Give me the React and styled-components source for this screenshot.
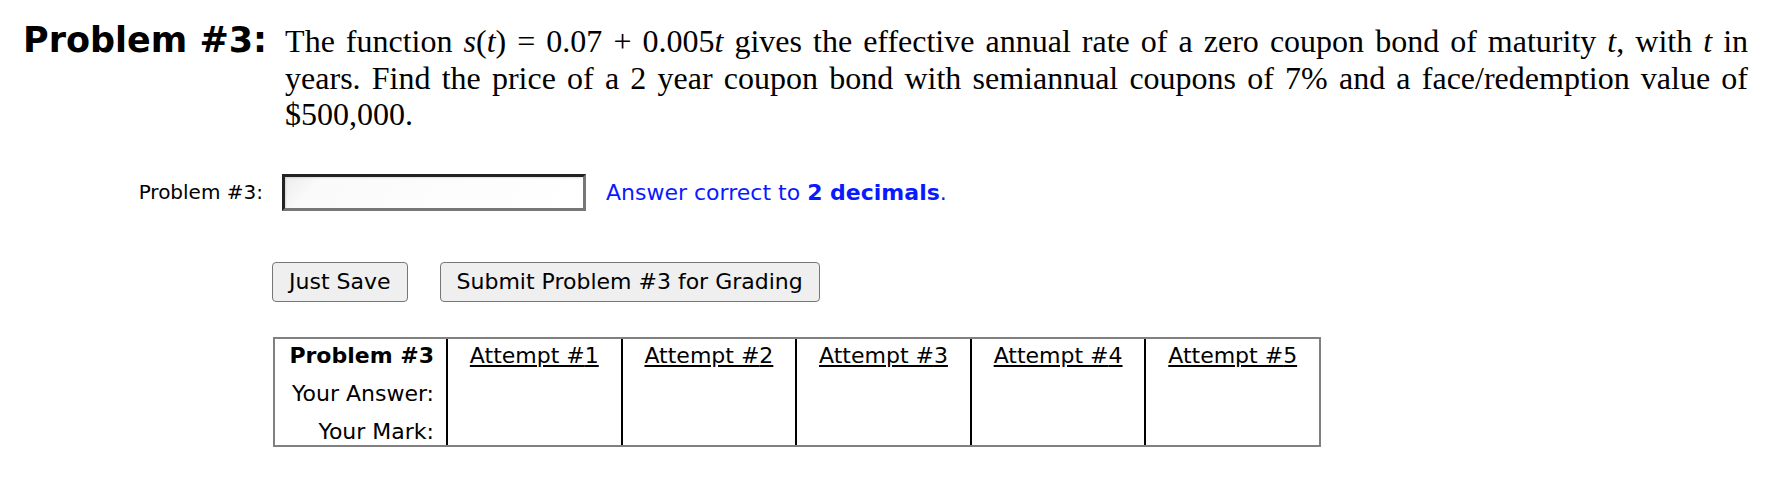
import styled, { createGlobalStyle } from "styled-components";

const GlobalStyle = createGlobalStyle`
  body {
    margin: 0;
    background: #ffffff;
    color: #000000;
    font-family: "DejaVu Sans", Verdana, sans-serif;
  }
`;

const Page = styled.div`
  width: 1772px;
  height: 500px;
  background: #fff;
`;

const Header = styled.div`
  display: flex;
  align-items: baseline;
  gap: 18px;
  padding: 20px 24px 0 23px;
`;

const Title = styled.h1`
  margin: 0;
  font-size: 35px;
  font-weight: bold;
  white-space: nowrap;
`;

const Statement = styled.p`
  flex: 1;
  margin: 0;
  font-family: "Liberation Serif", "Times New Roman", serif;
  font-size: 32px;
  line-height: 36.5px;
  text-align: justify;
`;

const Var = styled.i`
  font-style: italic;
`;

const AnswerRow = styled.div`
  display: flex;
  align-items: center;
  margin-top: 41px;
  height: 37px;
`;

const AnswerLabel = styled.label`
  width: 263px;
  text-align: right;
  font-size: 20px;
  margin-right: 19px;
`;

const AnswerInput = styled.input`
  box-sizing: border-box;
  width: 304px;
  height: 37px;
  margin: 0;
  border-style: solid;
  border-width: 3px;
  border-color: #222222 #777777 #777777 #222222;
  background: linear-gradient(135deg, #ececec 0%, #fafafa 12%, #ffffff 100%);
  box-shadow: inset 1px 1px 2px rgba(0, 0, 0, 0.12);
  font-size: 20px;
`;

const Hint = styled.span`
  margin-left: 20px;
  font-size: 22px;
  color: #0a1aff;
`;

const Buttons = styled.div`
  display: flex;
  gap: 32px;
  margin-top: 51px;
  padding-left: 272px;
`;

const Button = styled.button`
  height: 40px;
  padding: 0 16px;
  font-family: "DejaVu Sans", Verdana, sans-serif;
  font-size: 22px;
  color: #000;
  background: #efefef;
  border: 1px solid #767676;
  border-radius: 4px;
`;

const Grid = styled.div`
  display: grid;
  grid-template-columns: 171px repeat(5, 1fr);
  width: 1048px;
  box-sizing: border-box;
  margin: 35px 0 0 273px;
  border: 2px solid #808080;
`;

const Cell = styled.div`
  padding: ${(p) => (p.$last ? "3px 12px 0" : "3px 12px 8px")};
  font-size: 22px;
  line-height: 27px;
  text-align: ${(p) => (p.$center ? "center" : "right")};
  font-weight: ${(p) => (p.$bold ? "bold" : "normal")};
  border-left: ${(p) => (p.$divider ? "2px solid #000" : "none")};
`;

const AttemptLink = styled.a`
  color: #000;
  text-decoration: underline;
`;

const attempts = [1, 2, 3, 4, 5];

export default function App() {
  return (
    <Page>
      <GlobalStyle />
      <Header>
        <Title>Problem #3:</Title>
        <Statement>
          The function <Var>s</Var>(<Var>t</Var>) = 0.07 + 0.005<Var>t</Var> gives
          the effective annual rate of a zero coupon bond of maturity <Var>t</Var>,
          with <Var>t</Var> in years. Find the price of a 2 year coupon bond with
          semiannual coupons of 7% and a face/redemption value of $500,000.
        </Statement>
      </Header>

      <AnswerRow>
        <AnswerLabel>Problem #3:</AnswerLabel>
        <AnswerInput type="text" />
        <Hint>
          Answer correct to <b>2 decimals</b>.
        </Hint>
      </AnswerRow>

      <Buttons>
        <Button>Just Save</Button>
        <Button>Submit Problem #3 for Grading</Button>
      </Buttons>

      <Grid>
        <Cell $bold>Problem #3</Cell>
        {attempts.map((n) => (
          <Cell key={`h${n}`} $center $divider>
            <AttemptLink>Attempt #{n}</AttemptLink>
          </Cell>
        ))}
        <Cell>Your Answer:</Cell>
        {attempts.map((n) => (
          <Cell key={`a${n}`} $center $divider />
        ))}
        <Cell $last>Your Mark:</Cell>
        {attempts.map((n) => (
          <Cell key={`m${n}`} $center $divider $last />
        ))}
      </Grid>
    </Page>
  );
}
